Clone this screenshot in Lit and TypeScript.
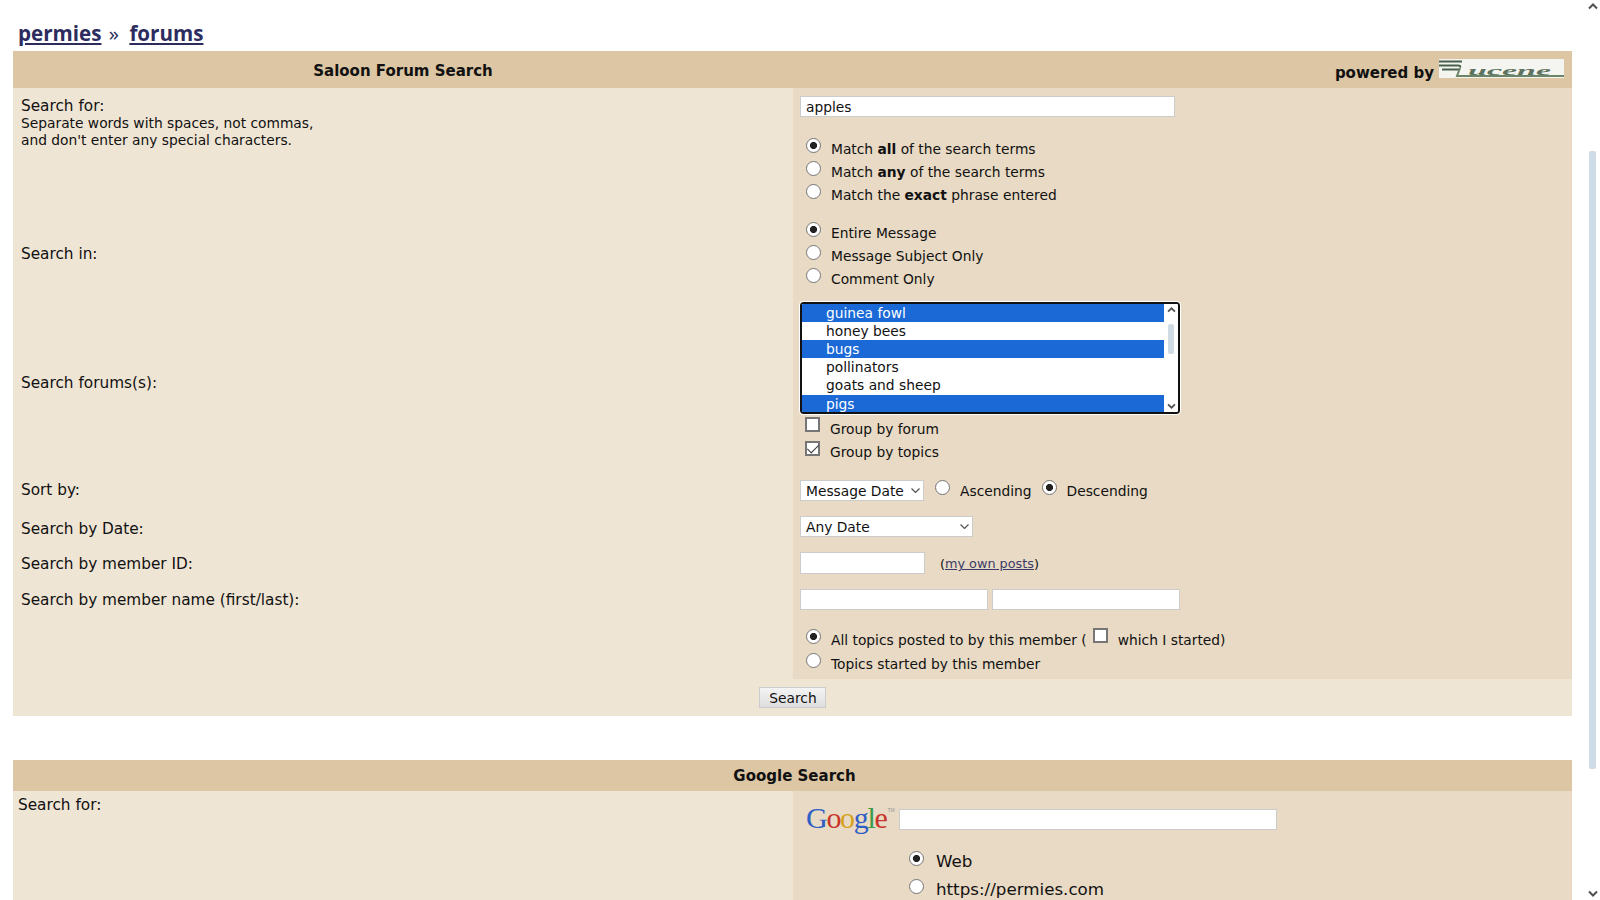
import { LitElement, html, css } from "lit";
import { customElement } from "lit/decorators.js";

const Up = html`<svg class="arrow" viewBox="0 0 10 7" width="10" height="7"><path d="M1 5.5 5 1.5 9 5.5" fill="none" stroke="#505050" stroke-width="2"/></svg>`;
const Down = html`<svg class="arrow" viewBox="0 0 10 7" width="10" height="7"><path d="M1 1.5 5 5.5 9 1.5" fill="none" stroke="#505050" stroke-width="2"/></svg>`;
const Chev = html`<svg class="chev" viewBox="0 0 9 5" width="9" height="5"><path d="M.5.5 4.5 4.5 8.5.5" fill="none" stroke="#555" stroke-width="1.2"/></svg>`;

@customElement("app-root")
export class AppRoot extends LitElement {
  static styles = css`
    :host { display: flex; width: 1600px; height: 900px; overflow: hidden; background: #fff; color: #111;
      font-family: "DejaVu Sans", Verdana, sans-serif; font-size: 13.8px; line-height: 18px; }
    * { box-sizing: border-box; }
    .page { width: 1585px; padding-left: 13px; }
    .crumbs { height: 51px; padding: 18px 0 0 5px; font-family: "Open Sans", sans-serif; font-weight: 700; font-size: 20.6px; line-height: 30px; color: #2c2c5e; }
    .crumbs a { color: inherit; text-decoration: underline; text-decoration-thickness: 2px; text-underline-offset: 2px; }
    .crumbs .sep { margin: 0 5px 0 2px; font-weight: 400; }
    .table { width: 1559px; }
    .head { display: grid; grid-template-columns: 780px 779px; background: #dcc6a3; height: 37px; font-weight: 700; font-size: 15px; }
    .head .title { text-align: center; padding-top: 11px; }
    .head .pow { display: flex; justify-content: flex-end; padding: 8px 8px 0 0; gap: 5px; }
    .pow span { padding-top: 5px; }
    .logo { display: block; width: 125px; height: 19px; background: #f4f5f0; }
    .logo text { font-family: "Liberation Serif", serif; font-style: italic; font-size: 13px; fill: #5d7360; }
    .row { display: grid; grid-template-columns: 780px 779px; }
    .l { background: #efe5d4; padding-left: 8px; display: flex; align-items: center; font-size: 15.3px; }
    .r { background: #e8dac4; }
    .l.top { display: block; padding-top: 10px; line-height: 17px; }
    .small { font-size: 13.8px; }
    .up1 { padding-bottom: 2px; }
    .dn1 { padding-top: 2px; }
    .dn2 { padding-top: 4px; }
    .tx { display: block; height: 21px; width: 375px; background: #fff; border: 1.5px solid #ccc; padding: 0 5px; color: #111; font: inherit; margin: 0; outline: none; }
    input[type="radio"] { appearance: none; width: 15px; height: 15px; margin: 0; flex: none; border-radius: 50%; border: 1.5px solid #767676; background: #fff; }
    input[type="radio"]:checked { background: radial-gradient(circle, #222 3.2px, #fff 3.9px); }
    input[type="checkbox"] { appearance: none; width: 15px; height: 15px; margin: 0; flex: none; border: 2px solid #767676; background: #fff; border-radius: 0; position: relative; }
    input[type="checkbox"]:checked::after { content: ""; position: absolute; left: 3px; top: -1px; width: 5px; height: 10px; border: solid #333; border-width: 0 1.5px 1.5px 0; transform: rotate(45deg); }
    .opt { display: flex; align-items: flex-start; height: 23px; padding-left: 13px; }
    .opt input { margin: 0 10px 0 0; }
    .opt label { padding-top: 2px; white-space: nowrap; }
    .r1 { height: 130px; padding: 8px 0 0 7px; }
    .r1 .opts { margin: 21px 0 0 -7px; }
    .r2 { height: 73px; padding-top: 4px; }
    .r3 { height: 180px; padding: 11px 0 0 7px; }
    .lb { width: 380px; height: 112px; border: 2px solid #111; border-radius: 3px; outline: 1px solid #fff; background: #fff; display: flex; overflow: hidden; }
    .lb .items { width: 362px; }
    .lb .it { height: 18px; padding-left: 24px; white-space: nowrap; }
    .lb .it.tall { height: 19px; }
    .lb .it.sel { background: #1a69d6; color: #fff; }
    .lb .sb { flex: 1; display: flex; flex-direction: column; align-items: center; justify-content: space-between; padding: 3px 0; position: relative; }
    .lb .sb i { position: absolute; top: 20px; left: 4px; width: 6px; height: 30px; background: #d0dae3; border-radius: 2px; }
    .lb .arrow { width: 9px; height: 6px; }
    .chk { display: flex; align-items: flex-start; height: 23px; margin-top: 3px; padding-left: 5px; }
    .chk + .chk { margin-top: 1px; }
    .chk label { padding: 3px 0 0 10px; white-space: nowrap; }
    .chk + .chk label { padding-top: 2px; }
    .sel { position: relative; display: block; height: 21px; flex: none; }
    select { appearance: none; display: block; width: 100%; height: 21px; background: #fff; border: 1.5px solid #ccc; border-radius: 0; font: inherit; color: #111; padding: 1px 0 0 5px; margin: 0; outline: none; }
    .chev { position: absolute; right: 4px; top: 8px; }
    .r4 { height: 37px; padding: 9px 0 0 7px; display: flex; align-items: flex-start; }
    .r4 .s1 { width: 124px; margin-right: 1px; }
    .r4 input { margin: 0 10px 0 10px; }
    .r4 label { padding-top: 2px; }
    .r5 { height: 37px; padding: 8px 0 0 7px; }
    .r5 .sel { width: 173px; }
    .r6 { height: 36px; padding: 7px 0 0 7px; display: flex; }
    .r6 .tx { width: 125px; height: 22px; }
    .r6 .own { font-size: 12.8px; margin-left: 15px; padding-top: 3px; color: #111; }
    .r6 .own a { color: #3a3a66; text-decoration: underline; }
    .r7 { height: 36px; padding: 8px 0 0 7px; display: flex; gap: 4px; }
    .r7 .tx { width: 188px; }
    .r8 { height: 62px; padding-top: 12px; }
    .r8 .opt { height: 24px; }
    .r8 .opt input[type="checkbox"] { margin: -1px 10px 0 6px; }
    .opt .lbl2 { padding-top: 2px; white-space: nowrap; }
    .foot { background: #efe5d4; height: 37px; display: flex; justify-content: center; padding-top: 8px; }
    .btn { width: 67px; height: 21px; border: 1px solid #ccc; background: linear-gradient(#f4f4f4, #dedede); color: #111; font: inherit; padding: 0 0 0 1px; }
    .spacer { height: 44px; }
    .ghead { background: #dcc6a3; height: 31px; text-align: center; font-weight: 700; font-size: 15px; padding: 7px 0 0 4px; }
    .g { height: 109px; }
    .g .l { display: block; padding: 5px 0 0 5px; }
    .gline { display: flex; padding: 13px 0 0 13px; }
    .glogo { width: 93px; font-family: "Liberation Serif", serif; font-size: 30px; line-height: 28px; letter-spacing: -1.3px; display: flex; }
    .glogo b { font-weight: 400; }
    .gb { color: #2f5fc4; }
    .gr { color: #c8352a; }
    .gy { color: #d6a21e; }
    .gg { color: #3d9a48; }
    .glogo sup { font-size: 5px; line-height: 8px; color: #999; letter-spacing: 0; font-family: "Liberation Sans", sans-serif; position: relative; top: 2px; left: 1px; margin: 0; }
    .gline .tx { width: 378px; height: 21px; margin-top: 5px; }
    .gopts { padding: 19px 0 0 109px; font-size: 16.7px; line-height: 20px; }
    .gopts .opt { height: 28px; padding-left: 7px; }
    .gopts .opt input { margin-right: 12px; }
    .gopts .opt label { padding-top: 0; }
    .vs { flex: none; width: 15px; height: 900px; position: relative; display: block; }
    .vs .arrow { position: absolute; left: 3px; }
    .vs .au { top: 3px; }
    .vs .ad { top: 890px; }
    .vs i { position: absolute; left: 4px; top: 151px; width: 7px; height: 618px; background: #cfdbe6; border-radius: 2px; }
  `;

  private radio(name: string, checked: boolean, text: unknown) {
    return html`<div class="opt"><input type="radio" name=${name} ?checked=${checked} /><label>${text}</label></div>`;
  }

  render() {
    return html`
      <div class="page">
        <div class="crumbs"><a>permies</a><span class="sep"> » </span><a>forums</a></div>
        <div class="table">
          <div class="head">
            <div class="title">Saloon Forum Search</div>
            <div class="pow"><span>powered by</span>
              <svg class="logo" viewBox="0 0 125 19" role="img" aria-label="Lucene">
                <path d="M0 2.5h23M0 6.5h19q3 0 2 2M3 10.5h17" stroke="#47604a" stroke-width="2" fill="none"/>
                <path d="M21 9l-3 8h107" stroke="#6a8468" stroke-width="2" fill="none"/>
                <text x="29" y="16" textLength="83" lengthAdjust="spacingAndGlyphs">ucene</text>
              </svg>
            </div>
          </div>
          <div class="row">
            <div class="l top">Search for:<br /><span class="small">Separate words with spaces, not commas,<br />and don't enter any special characters.</span></div>
            <div class="r r1">
              <input class="tx" value="apples" />
              <div class="opts">
                ${this.radio("m", true, html`Match <b>all</b> of the search terms`)}
                ${this.radio("m", false, html`Match <b>any</b> of the search terms`)}
                ${this.radio("m", false, html`Match the <b>exact</b> phrase entered`)}
              </div>
            </div>
          </div>
          <div class="row">
            <div class="l up1">Search in:</div>
            <div class="r r2">
              ${this.radio("i", true, "Entire Message")}
              ${this.radio("i", false, "Message Subject Only")}
              ${this.radio("i", false, "Comment Only")}
            </div>
          </div>
          <div class="row">
            <div class="l dn2">Search forums(s):</div>
            <div class="r r3">
              <div class="lb">
                <div class="items">
                  <div class="it sel">guinea fowl</div>
                  <div class="it">honey bees</div>
                  <div class="it sel">bugs</div>
                  <div class="it">pollinators</div>
                  <div class="it tall">goats and sheep</div>
                  <div class="it sel">pigs</div>
                </div>
                <div class="sb">${Up}<i></i>${Down}</div>
              </div>
              <div class="chk"><input type="checkbox" /><label>Group by forum</label></div>
              <div class="chk"><input type="checkbox" checked /><label>Group by topics</label></div>
            </div>
          </div>
          <div class="row">
            <div class="l">Sort by:</div>
            <div class="r r4">
              <span class="sel s1"><select><option>Message Date</option></select>${Chev}</span>
              <input type="radio" name="o" /><label>Ascending</label>
              <input type="radio" name="o" checked /><label>Descending</label>
            </div>
          </div>
          <div class="row">
            <div class="l dn2">Search by Date:</div>
            <div class="r r5"><span class="sel"><select><option>Any Date</option></select>${Chev}</span></div>
          </div>
          <div class="row">
            <div class="l dn1">Search by member ID:</div>
            <div class="r r6"><input class="tx" /><span class="own">(<a>my own posts</a>)</span></div>
          </div>
          <div class="row">
            <div class="l dn1">Search by member name (first/last):</div>
            <div class="r r7"><input class="tx" /><input class="tx" /></div>
          </div>
          <div class="row">
            <div class="l"></div>
            <div class="r r8">
              <div class="opt"><input type="radio" name="t" checked /><label>All topics posted to by this member (</label><input type="checkbox" /><span class="lbl2">which I started)</span></div>
              ${this.radio("t", false, "Topics started by this member")}
            </div>
          </div>
          <div class="foot"><button class="btn">Search</button></div>
          <div class="spacer"></div>
          <div class="ghead">Google Search</div>
          <div class="row g">
            <div class="l">Search for:</div>
            <div class="r">
              <div class="gline">
                <div class="glogo"><b class="gb">G</b><b class="gr">o</b><b class="gy">o</b><b class="gb">g</b><b class="gg">l</b><b class="gr">e</b><sup>TM</sup></div>
                <input class="tx" />
              </div>
              <div class="gopts">
                ${this.radio("g", true, "Web")}
                ${this.radio("g", false, "https://permies.com")}
              </div>
            </div>
          </div>
        </div>
      </div>
      <div class="vs">
        <svg class="arrow au" viewBox="0 0 10 7" width="10" height="7"><path d="M1 5.5 5 1.5 9 5.5" fill="none" stroke="#505050" stroke-width="2"/></svg>
        <i></i>
        <svg class="arrow ad" viewBox="0 0 10 7" width="10" height="7"><path d="M1 1.5 5 5.5 9 1.5" fill="none" stroke="#505050" stroke-width="2"/></svg>
      </div>
    `;
  }
}
